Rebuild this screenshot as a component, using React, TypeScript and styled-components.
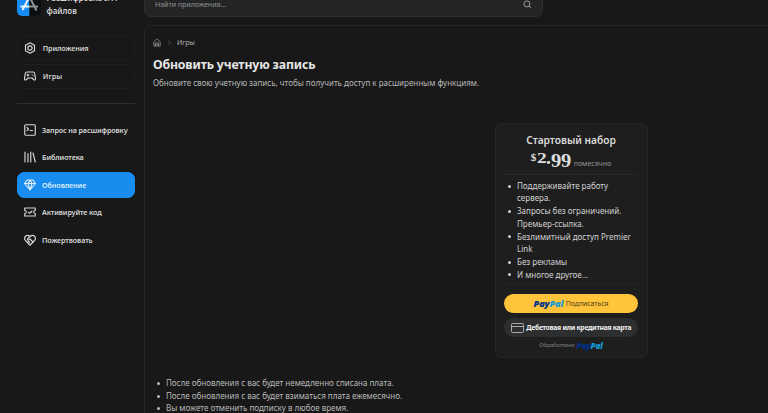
import React from "react";
import styled, { createGlobalStyle } from "styled-components";

const Global = createGlobalStyle`
  * { box-sizing: border-box; }
  html, body { margin: 0; height: 100%; overflow: hidden; background: #181818; }
  body { font-family: "Noto Sans", "Open Sans", sans-serif; color: #d4d4d4; }
`;

const Page = styled.div`
  display: grid;
  grid-template-columns: 144px 1fr;
  height: 413px;
  overflow: hidden;
  background: #181818;
`;

const Sidebar = styled.aside`
  display: flex;
  flex-direction: column;
  padding: 0 9px 0 17px;
`;

const Brand = styled.div`
  display: flex;
  gap: 5.5px;
  height: 16px;
  margin-bottom: 19px;
`;

const Logo = styled.svg`
  width: 24px;
  height: 24px;
  margin-top: -8px;
  flex: none;
`;

const BrandName = styled.div`
  margin-top: -8px;
  font-size: 8px;
  font-weight: 600;
  line-height: 12.5px;
  letter-spacing: -0.05px;
  color: #d2d2d2;
  white-space: nowrap;
`;

const Nav = styled.nav<{ $gap: number }>`
  display: flex;
  flex-direction: column;
  gap: ${(p) => p.$gap}px;
`;

const NavItem = styled.a<{ $active?: boolean; $outlined?: boolean }>`
  display: flex;
  align-items: center;
  gap: ${(p) => (p.$outlined ? 6.8 : 6)}px;
  height: 25.5px;
  padding-left: 6px;
  border: 1px solid
    ${(p) => (p.$active ? "#198cf0" : p.$outlined ? "#1e1e1e" : "transparent")};
  border-radius: 7px;
  background: ${(p) => (p.$active ? "#198cf0" : "transparent")};
  color: ${(p) => (p.$active ? "#dcecfa" : "#d6d6d6")};
  font-size: 7.2px;
  font-weight: 600;
  white-space: nowrap;
`;

const Label = styled.span<{ $track?: number }>`
  letter-spacing: ${(p) => p.$track ?? 0}px;
`;

const NavIcon = styled.svg`
  width: 12px;
  height: 12px;
  flex: none;
  fill: none;
  stroke: currentColor;
  stroke-width: 2.3;
  stroke-linecap: round;
  stroke-linejoin: round;
`;

const Separator = styled.div`
  height: 1px;
  margin: 14px 0 13px;
  background: #303030;
`;

const Content = styled.div`
  display: flex;
  flex-direction: column;
  min-width: 0;
`;

const Search = styled.div`
  display: flex;
  align-items: center;
  justify-content: space-between;
  width: 399px;
  height: 25px;
  margin-top: -8px;
  margin-bottom: 8px;
  padding: 0 10.5px 0 10px;
  flex: none;
  border: 1px solid #2e2f31;
  border-radius: 7px;
  background: #242424;
  color: #8e9399;
  font-size: 7px;
`;

const SearchIcon = styled.svg`
  width: 8.5px;
  height: 8.5px;
  fill: none;
  stroke: #a5a5a5;
  stroke-width: 2.6;
`;

const Panel = styled.main`
  display: flex;
  flex-direction: column;
  height: 400px;
  padding: 11px 0 0 8px;
  flex: none;
  border: 1px solid #262626;
  border-right: 0;
  border-radius: 7px 0 0 0;
`;

const Crumbs = styled.div`
  display: flex;
  align-items: center;
  height: 10px;
  font-size: 7px;
  color: #b0b0b0;
`;

const HomeIcon = styled.svg`
  width: 8px;
  height: 9px;
  fill: none;
  stroke: #9a9a9a;
  stroke-width: 1.8;
  stroke-linejoin: round;
`;

const Chevron = styled.svg`
  width: 3px;
  height: 5px;
  margin: 0 6px 0 7px;
  fill: none;
  stroke: #4c4c4c;
`;

const Title = styled.h1`
  margin: 9px 0 0;
  font-size: 12.3px;
  line-height: 18px;
  font-weight: 700;
  color: #e6e6e6;
`;

const Subtitle = styled.p`
  margin: 3px 0 0;
  font-size: 8px;
  line-height: 12px;
  color: #b8b8b8;
`;

const Plan = styled.section`
  display: flex;
  flex-direction: column;
  width: 153px;
  height: 235px;
  margin: 34px 0 0 342px;
  padding: 7px 9px 0 8px;
  flex: none;
  border: 1px solid #262626;
  border-radius: 6px;
  background: #1e1e1e;
`;

const PlanName = styled.h2`
  margin: 0;
  font-size: 10.2px;
  line-height: 18px;
  font-weight: 600;
  text-align: center;
  color: #dcdcdc;
`;

const PriceRow = styled.div`
  display: flex;
  justify-content: center;
  height: 26px;
  flex: none;
  line-height: 20px;
  color: #dedede;
  border-bottom: 1px solid #282828;
`;

const Price = styled.span`
  display: flex;
  font-family: "Liberation Serif", serif;
  font-weight: 700;
`;

const Figure = styled.span<{
  $size: number;
  $drop: number;
  $width: number;
  $stretch?: number;
}>`
  width: ${(p) => p.$width}px;
  margin-top: ${(p) => p.$drop}px;
  font-size: ${(p) => p.$size}px;
  transform: scaleX(${(p) => p.$stretch ?? 1});
  transform-origin: left;
`;

const Period = styled.span`
  margin: 4.5px 0 0 2px;
  font-size: 7px;
  color: #969696;
`;

const BulletList = styled.ul`
  margin: 0;
  padding: 0;
  list-style: none;
  line-height: 12.7px;

  li::before {
    content: "";
    display: inline-block;
    width: 3px;
    height: 3px;
    margin: 0 6.2px 1.2px -9.2px;
    border-radius: 50%;
    background: currentColor;
  }
`;

const Features = styled(BulletList)`
  height: 110px;
  flex: none;
  padding: 4.7px 0 0 13px;
  border-bottom: 1px solid #262626;
  font-size: 8px;
  color: #d2d2d2;
`;

const PayButton = styled.button<{ $gold?: boolean }>`
  display: flex;
  align-items: center;
  justify-content: center;
  gap: 2.5px;
  height: 19px;
  margin: ${(p) => (p.$gold ? "9px 0 5px" : "0")};
  padding: 0;
  flex: none;
  border: 0;
  border-radius: 10px;
  background: ${(p) => (p.$gold ? "#ffc439" : "#2c2e2f")};
  color: ${(p) => (p.$gold ? "#4b3c1c" : "#f0f0f0")};
  font-family: inherit;
  font-size: 6.8px;
  font-weight: ${(p) => (p.$gold ? 400 : 700)};
  white-space: nowrap;
`;

const Wordmark = styled.span<{ $size: number }>`
  font-family: "Open Sans", sans-serif;
  font-size: ${(p) => p.$size}px;
  font-style: italic;
  font-weight: 800;
  letter-spacing: -0.15px;
  color: #003087;
  span { color: #139ad6; }
`;

const CardIcon = styled.svg`
  width: 13px;
  height: 10px;
  flex: none;
  fill: none;
  stroke: #a9aaab;
`;

const Powered = styled.div`
  display: flex;
  align-items: center;
  justify-content: center;
  gap: 2px;
  height: 16px;
  font-size: 6px;
  font-style: italic;
  color: #7b8085;
`;

const Notes = styled(BulletList)`
  margin-top: 19px;
  padding-left: 13px;
  font-size: 8px;
  color: #bababa;
`;

const PayPal = ({ size }: { size: number }) => (
  <Wordmark $size={size}>Pay<span>Pal</span></Wordmark>
);

const icons = {
  apps: <><path d="M12 1.500 21 6.700v10.600L12 22.500 3 17.300V6.700Z" /><circle cx="12" cy="12" r="4.200" /></>,
  games: <><path d="M6 4h12c2 0 3 1 3.400 3L23 17c.3 3-2.500 4-4 2l-3-3H8l-3 3c-1.500 2-4.300 1-4-2L2.600 7C3 5 4 4 6 4Z" /><path d="M6 10h4M8 8v4M16 8.500h.1M18 11.500h.1" /></>,
  request: <><rect x="1.500" y="1.500" width="21" height="21" rx="2" /><path d="m6 7 3 3-3 3M12 13h5" /></>,
  library: <path d="M2 2v20M8 5v17M13.500 2v20M18 4l4.500 18" />,
  diamond: <path d="M6 2h12l5 7-11 13L1 9ZM1 9h22M8 9l4 13 4-13M8 9l4-7 4 7" />,
  ticket: <path d="M1.500 4h21v5c-4 0-4 6 0 6v5h-21v-5c4 0 4-6 0-6ZM8.500 12.500l3 2 4.500-4.500" />,
  donate: <><path d="M12 22.500 3 13C-2 7 5-1 12 5c7-6 14 2 9 8Z" /><path d="m12 5-5 5c0 3 3 3 5 0l6 6M8.500 14.500l3 3" /></>,
};

const Icon = ({ name }: { name: keyof typeof icons }) => (
  <NavIcon viewBox="0 0 24 24">{icons[name]}</NavIcon>
);

export default function App() {
  return (
    <>
      <Global />
      <Page>
        <Sidebar>
          <Brand>
            <Logo viewBox="0 0 24 24">
              <defs><clipPath id="logo"><rect width="24" height="24" rx="5" /></clipPath></defs>
              <g clipPath="url(#logo)">
                <path fill="#158cf4" d="M0 0h12.500v24H0z" />
                <path fill="#0b0d0e" d="M12.500 0H24v24H12.500z" />
              </g>
              <path d="M13 4 5.500 18M3.500 14.500h9" stroke="#e9f3fb" strokeWidth="2" fill="none" />
              <path d="m12.500 5 7 13.500M12.500 14.500h8.500" stroke="#8c9296" strokeWidth="2" fill="none" />
            </Logo>
            <BrandName>Расшифровка IPA<br />файлов</BrandName>
          </Brand>
          <Nav $gap={3}>
            <NavItem $outlined><Icon name="apps" /><Label $track={-0.1}>Приложения</Label></NavItem>
            <NavItem $outlined><Icon name="games" /><Label>Игры</Label></NavItem>
          </Nav>
          <Separator />
          <Nav $gap={2}>
            <NavItem><Icon name="request" /><Label $track={-0.15}>Запрос на расшифровку</Label></NavItem>
            <NavItem><Icon name="library" /><Label $track={-0.12}>Библиотека</Label></NavItem>
            <NavItem $active><Icon name="diamond" /><Label $track={-0.08}>Обновление</Label></NavItem>
            <NavItem><Icon name="ticket" /><Label $track={-0.12}>Активируйте код</Label></NavItem>
            <NavItem><Icon name="donate" /><Label $track={-0.12}>Пожертвовать</Label></NavItem>
          </Nav>
        </Sidebar>
        <Content>
          <Search>
            <Label>Найти приложения...</Label>
            <SearchIcon viewBox="0 0 24 24"><circle cx="11" cy="11" r="8.500" /><path d="m17 17 5.500 5.500" /></SearchIcon>
          </Search>
          <Panel>
            <Crumbs>
              <HomeIcon viewBox="0 0 20 22"><path d="M2 9 10 2l8 7v11H2ZM6 20v-8h8v8M6 16h8" /></HomeIcon>
              <Chevron viewBox="0 0 3 5"><path d="m.5.500 2 2-2 2" /></Chevron>
              <Label>Игры</Label>
            </Crumbs>
            <Title><Label $track={-0.15}>Обновить учетную запись</Label></Title>
            <Subtitle><Label>Обновите свою учетную запись, чтобы получить доступ к расширенным функциям.</Label></Subtitle>
            <Plan>
              <PlanName>Стартовый набор</PlanName>
              <PriceRow>
                <Price>
                  <Figure $size={11} $drop={-2} $width={6}>$</Figure>
                  <Figure $size={15} $drop={-1} $width={9.5} $stretch={1.3}>2</Figure>
                  <Figure $size={18} $drop={-1} $width={5} $stretch={1.1}>.</Figure>
                  <Figure $size={19} $drop={2} $width={10.3} $stretch={1.08}>9</Figure>
                  <Figure $size={19} $drop={2} $width={10.3} $stretch={1.08}>9</Figure>
                </Price>
                <Period>помесячно</Period>
              </PriceRow>
              <Features>
                <li>Поддерживайте работу<br />сервера.</li>
                <li>Запросы без ограничений.<br />Премьер-ссылка.</li>
                <li>Безлимитный доступ Premier<br />Link</li>
                <li>Без рекламы</li>
                <li>И многое другое...</li>
              </Features>
              <PayButton $gold><PayPal size={9.2} /><Label>Подписаться</Label></PayButton>
              <PayButton>
                <CardIcon viewBox="0 0 13 10"><rect x=".5" y=".5" width="12" height="9" rx="1" /><path d="M1 3.500h11" /></CardIcon>
                <Label $track={-0.28}>Дебетовая или кредитная карта</Label>
              </PayButton>
              <Powered><Label $track={-0.1}>Обработано</Label><PayPal size={8.2} /></Powered>
            </Plan>
            <Notes>
              <li>После обновления с вас будет немедленно списана плата.</li>
              <li>После обновления с вас будет взиматься плата ежемесячно.</li>
              <li>Вы можете отменить подписку в любое время.</li>
            </Notes>
          </Panel>
        </Content>
      </Page>
    </>
  );
}
